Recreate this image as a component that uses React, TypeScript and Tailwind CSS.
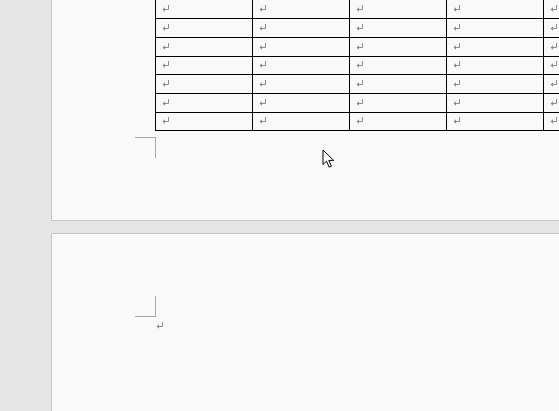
import React from "react";

const Ret = ({ className = "" }: { className?: string }) => (
  <svg width="8" height="7" viewBox="0 0 8 7" className={className}>
    <path d="M6.5 0 V4.5 H1.5" fill="none" stroke="#8c8c8c" strokeWidth="1" />
    <path d="M0.5 4.5 L3 2.2 L3 6.8 Z" fill="#8c8c8c" />
  </svg>
);

const rowHeights = ["h-[19px]", "h-[19px]", "h-[19px]", "h-[18px]", "h-[19px]", "h-[19px]", "h-[18px]"];

export default function App() {
  return (
    <div className="w-[559px] h-[411px] overflow-hidden bg-[#e6e6e6] flex flex-col pl-[51px]" style={{ fontFamily: '"Liberation Sans", sans-serif' }}>
      {/* Page 1 */}
      <div className="relative h-[221px] shrink-0 bg-[#f9f9f9] border-l border-b border-[#c6c6c6] flex flex-col">
        <div className="ml-[103px] flex flex-col border-l border-black w-[600px]">
          {rowHeights.map((h, r) => (
            <div key={r} className={`flex ${h} border-b border-black`}>
              {[0, 1, 2, 3, 4].map((c) => (
                <div key={c} className={`w-[97px] shrink-0 ${c < 4 ? "border-r border-black" : ""} pl-[6px] flex items-center`}>
                  <Ret className="mb-[2px]" />
                </div>
              ))}
            </div>
          ))}
        </div>
        <div className="ml-[83px] mt-[6px] w-[21px] h-[21px] border-t border-r border-[#a8a8a8]" />
        <svg className="absolute left-[270px] top-[149px]" width="13" height="20" viewBox="0 0 13 20">
          <path d="M1 1 V15.5 L4.5 12.2 L7.2 18.2 L9.4 17.2 L6.8 11.4 H11.6 Z" fill="#ffffff" stroke="#000000" strokeWidth="1" strokeLinejoin="miter" />
        </svg>
      </div>
      {/* Page 2 */}
      <div className="mt-[12px] flex-1 bg-[#f9f9f9] border-l border-t border-[#c6c6c6] flex flex-col">
        <div className="ml-[83px] mt-[62px] w-[21px] h-[21px] border-b border-r border-[#a8a8a8]" />
        <div className="ml-[104px] mt-[5px]">
          <Ret />
        </div>
      </div>
    </div>
  );
}
